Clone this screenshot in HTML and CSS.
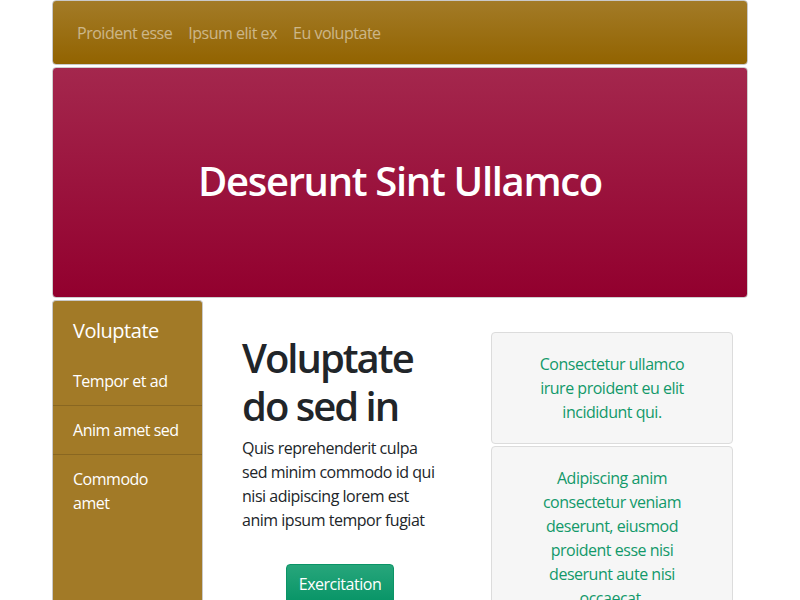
FILE: index.html
```html
<!DOCTYPE html>
<html lang="en">
<head>
<meta charset="utf-8">
<title>Deserunt Sint Ullamco</title>
<link rel="stylesheet" href="styles.css">
</head>
<body>
<div class="page">
  <nav class="navbar">
    <a class="nav-link" href="#">Proident esse</a>
    <a class="nav-link" href="#">Ipsum elit ex</a>
    <a class="nav-link" href="#">Eu voluptate</a>
  </nav>
  <header class="hero">
    <h1 class="hero-title">Deserunt Sint Ullamco</h1>
  </header>
  <div class="body-row">
    <aside class="sidebar">
      <div class="side-title">Voluptate</div>
      <a class="side-item" href="#">Tempor et ad</a>
      <a class="side-item" href="#">Anim amet sed</a>
      <a class="side-item" href="#">Commodo amet</a>
    </aside>
    <main class="main">
      <section class="intro">
        <h2 class="intro-title">Voluptate do sed in</h2>
        <p class="intro-text">Quis reprehenderit culpa sed minim commodo id qui nisi adipiscing lorem est anim ipsum tempor fugiat</p>
        <div class="btn-wrap"><a class="btn" href="#">Exercitation</a></div>
      </section>
      <section class="cards">
        <div class="card">Consectetur ullamco irure proident eu elit incididunt qui.</div>
        <div class="card">Adipiscing anim consectetur veniam deserunt, eiusmod proident esse nisi deserunt aute nisi occaecat.</div>
      </section>
    </main>
  </div>
</div>
</body>
</html>
```
FILE: styles.css
```css
* { box-sizing: border-box; }
html, body { margin: 0; padding: 0; background: #fff; }
body {
  font-family: "Open Sans", "Noto Sans", sans-serif;
  font-size: 16px;
  line-height: 24px;
  letter-spacing: -0.03em;
  color: #212529;
  overflow: hidden;
}
a { text-decoration: none; }
.page {
  width: 696px;
  margin: 0 auto;
}
.navbar {
  height: 65px;
  border: 1px solid #c9c9c9;
  border-radius: 4px;
  background: linear-gradient(#a37b27, #926300);
  display: flex;
  align-items: center;
  padding: 0 16px;
  margin-bottom: 2px;
}
.nav-link {
  color: rgba(255,255,255,0.5);
  padding: 1px 8px 0;
  line-height: 24px;
}
.hero {
  height: 231px;
  border: 1px solid #cfcfcf;
  border-radius: 4px;
  background: linear-gradient(#a4274d, #92002e);
  display: flex;
  align-items: center;
  justify-content: center;
  padding-bottom: 4px;
  margin-bottom: 2px;
}
.hero-title {
  margin: 0;
  color: #fff;
  font-size: 40px;
  font-weight: 600;
  line-height: 48px;
  letter-spacing: -0.033em;
}
.body-row {
  display: flex;
  align-items: flex-start;
}
.sidebar {
  width: 151px;
  height: 320px;
  flex: none;
  background: #a27a27;
  border: 1px solid #c9c9c9;
  border-bottom: none;
  border-radius: 4px 4px 0 0;
  display: flex;
  flex-direction: column;
}
.side-title {
  color: #fff;
  font-size: 20px;
  line-height: 30px;
  padding: 15px 20px 11px;
}
.side-item {
  color: #fff;
  padding: 12px 18px 12px 20px;
  border-bottom: 1px solid rgba(0,0,0,0.15);
}
.side-item:last-child { border-bottom: none; }
.main {
  flex: 1;
  display: flex;
  padding: 32px 15px 0 39px;
  gap: 51px;
}
.intro {
  width: 198px;
  flex: none;
}
.intro-title {
  margin: 0 0 6px;
  padding-top: 2px;
  font-size: 40px;
  font-weight: 600;
  line-height: 48px;
  letter-spacing: -0.05em;
  color: #212529;
}
.intro-text {
  margin: 0;
}
.btn-wrap {
  display: flex;
  justify-content: center;
  margin-top: 32px;
  padding-right: 2px;
}
.btn {
  display: inline-block;
  color: #fff;
  padding: 7px 12px;
  border-radius: 4px;
  border: 1px solid #0b9466;
  background: linear-gradient(#27a67b, #079466);
}
.cards {
  flex: 1;
  display: flex;
  flex-direction: column;
  gap: 2px;
}
.card {
  background: #f6f6f6;
  border: 1px solid #dcdcdc;
  border-radius: 4px;
  padding: 19px 40px;
  text-align: center;
  color: #12996a;
}
```
